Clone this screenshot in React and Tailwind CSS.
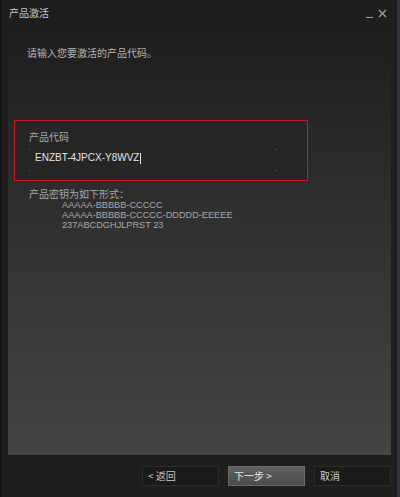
import React from 'react';

const cjk = { fontFamily: '"Noto Sans CJK SC", "Liberation Sans", sans-serif' };
const latin = { fontFamily: '"Liberation Sans", "Noto Sans CJK SC", sans-serif' };

function Button({ children, primary }) {
  return (
    <div
      className={
        'w-[77px] h-[20px] flex items-center pl-[5px] text-[10px] leading-none ' +
        (primary
          ? 'bg-gradient-to-b from-[#606060] to-[#4c4c4c] border border-[#6a6a6a] text-[#e8e8e8]'
          : 'bg-[#1a1a1a] border border-[#2c2c2c] text-[#c8c8c8]')
      }
      style={cjk}
    >
      {children}
    </div>
  );
}

export default function App() {
  return (
    <div className="w-[400px] h-[497px] bg-[#1e1e1f] flex flex-col border-l-2 border-l-[#141414] border-r-[3px] border-r-[#2a3644] overflow-hidden">
      {/* Title bar */}
      <div className="h-[30px] flex items-start justify-between pl-[7px] pr-[10px] pt-[5px] shrink-0">
        <span className="text-[10px] text-[#c4c4c4]" style={cjk}>产品激活</span>
        <div className="flex items-center gap-[5px] text-[#9a9a9a] mt-[3px]">
          <svg width="7" height="10" viewBox="0 0 7 10"><path d="M0 9.5H7" stroke="#9a9a9a" strokeWidth="1.2" /></svg>
          <svg width="9" height="9" viewBox="0 0 9 9"><path d="M1 1L8 8M8 1L1 8" stroke="#a0a0a0" strokeWidth="1.3" /></svg>
        </div>
      </div>

      {/* Content panel */}
      <div className="mx-[6px] h-[425px] bg-gradient-to-b from-[#1e1e1e] via-[#333232] to-[#464545] flex flex-col shrink-0">
        <div className="pl-[19px] pt-[15px] text-[10px] text-[#b4b4b4]" style={cjk}>
          请输入您要激活的产品代码。
        </div>

        <div className="ml-[6px] mt-[60px] w-[294px] h-[61px] border border-[#d0161e] bg-[#262626] pl-[14px] pt-[10px] relative">
          <div className="text-[10px] text-[#a8a8a8] leading-[12px]" style={cjk}>产品代码</div>
          <div className="mt-[9px] ml-[6px] flex items-center text-[10px] text-[#e4e4e4] leading-[12px]" style={latin}>
            ENZBT-4JPCX-Y8WVZ
            <span className="w-[1px] h-[11px] bg-[#e4e4e4] ml-[1px]" />
          </div>
          <span className="absolute left-[14px] top-[28px] w-[1px] h-[1px] bg-[#666]" />
          <span className="absolute left-[14px] top-[49px] w-[1px] h-[1px] bg-[#666]" />
          <span className="absolute left-[261px] top-[28px] w-[1px] h-[1px] bg-[#666]" />
          <span className="absolute left-[261px] top-[49px] w-[1px] h-[1px] bg-[#666]" />
        </div>

        <div className="pl-[21px] mt-[7px] text-[10px] text-[#a8a8a8] leading-[12px]" style={cjk}>
          产品密钥为如下形式：
        </div>
        <div className="pl-[54px] text-[9.2px] text-[#a8a8a8] leading-[10px]" style={latin}>
          <div>AAAAA-BBBBB-CCCCC</div>
          <div>AAAAA-BBBBB-CCCCC-DDDDD-EEEEE</div>
          <div>237ABCDGHJLPRST 23</div>
        </div>
      </div>

      {/* Footer */}
      <div className="flex-1 flex items-start justify-end gap-[9px] pt-[11px] pr-[6px]">
        <Button>&lt; 返回</Button>
        <Button primary>下一步 &gt;</Button>
        <Button>取消</Button>
      </div>
    </div>
  );
}
